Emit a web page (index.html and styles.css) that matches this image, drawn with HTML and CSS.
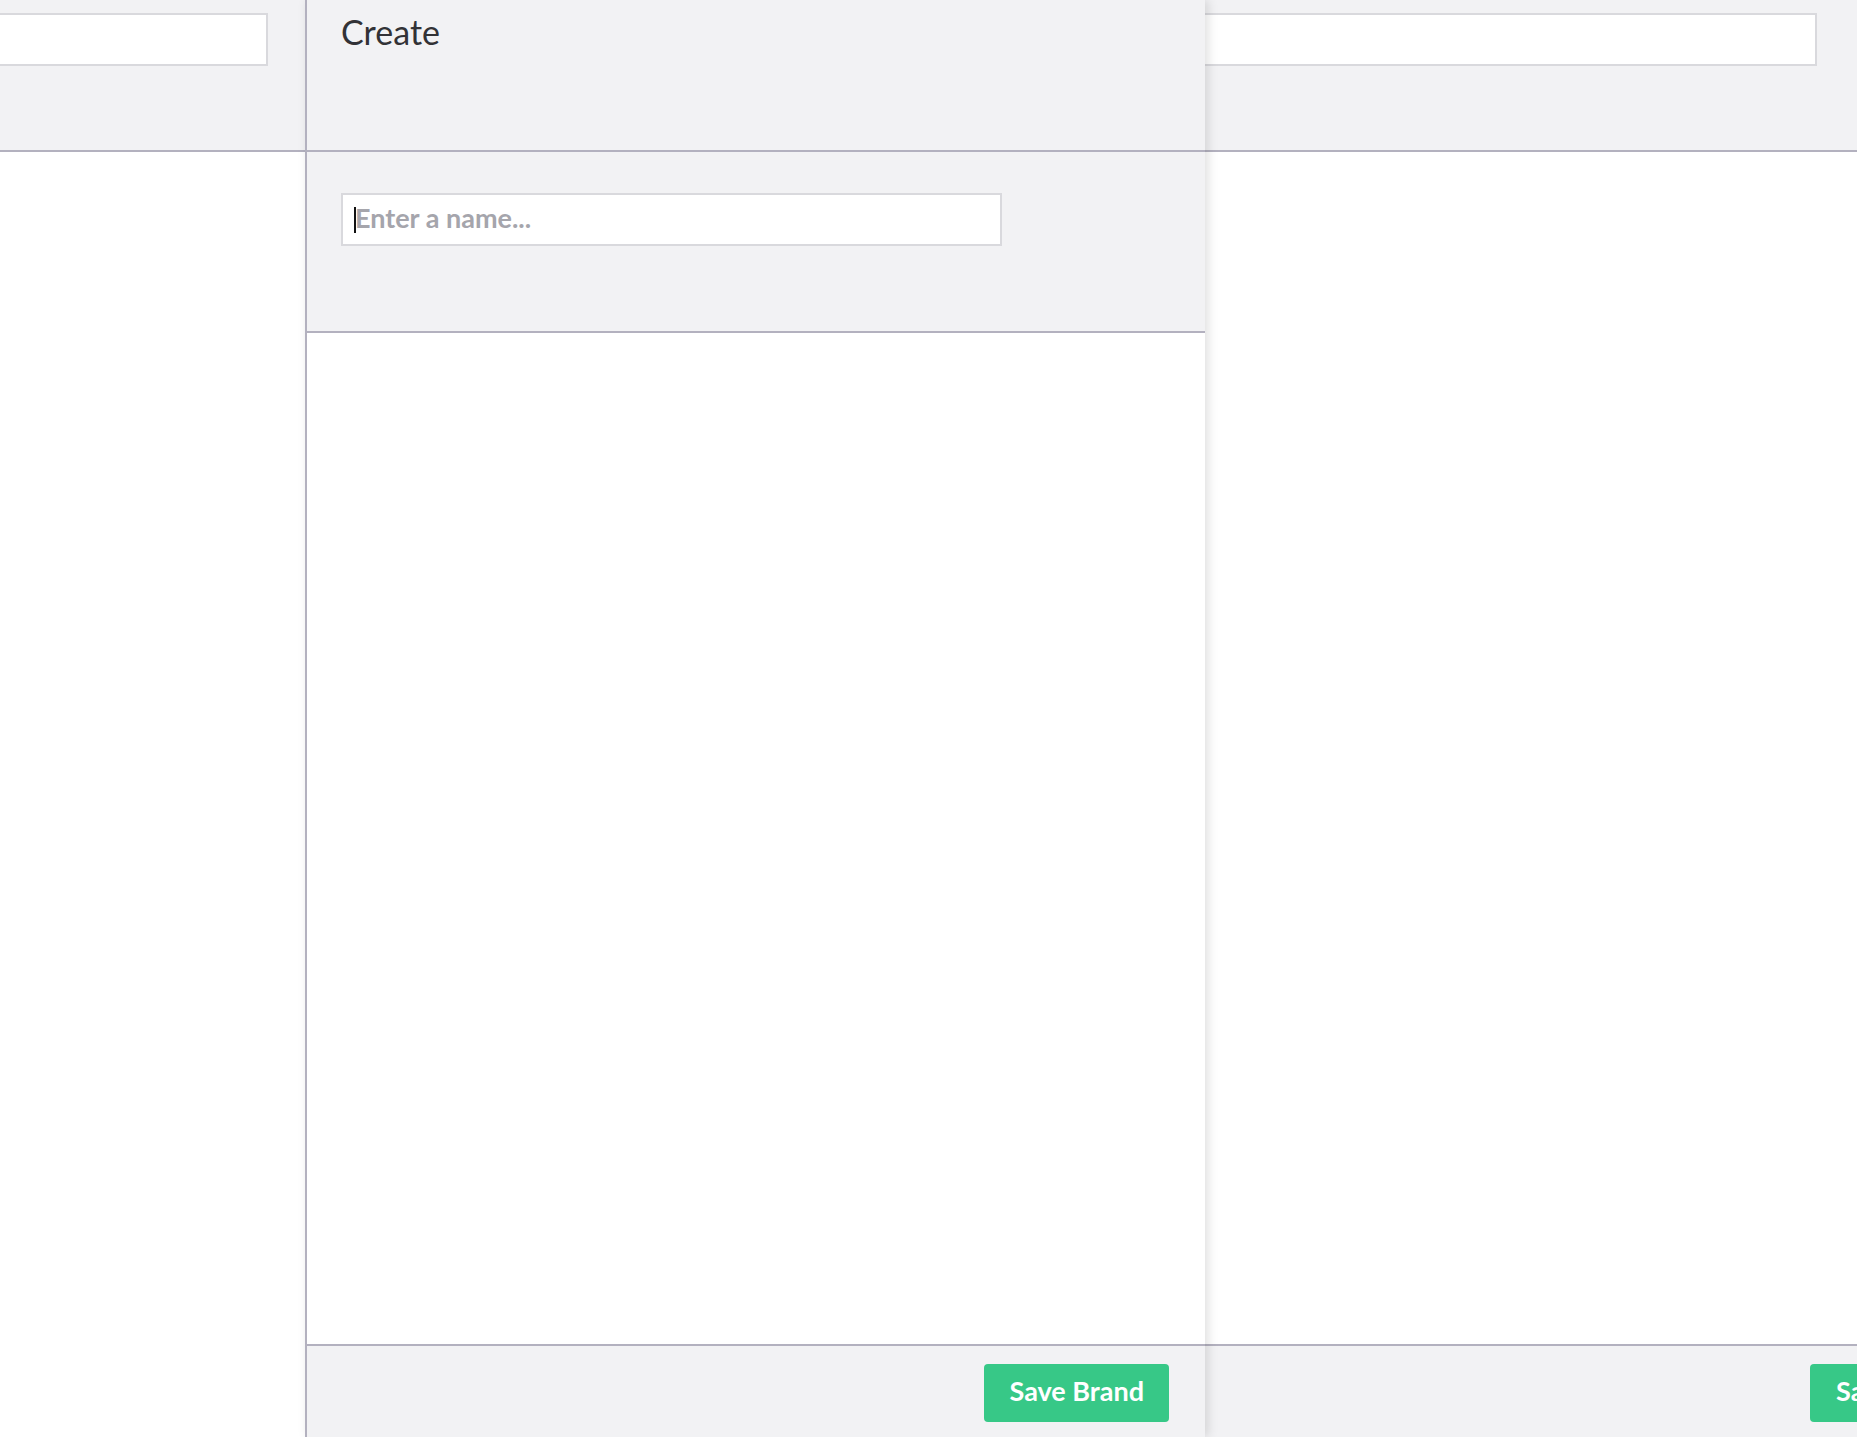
FILE: index.html
```html
<!DOCTYPE html>
<html lang="en">
<head>
<meta charset="utf-8">
<title>Create Brand</title>
<link rel="stylesheet" href="styles.css">
</head>
<body>
<div class="app">
  <section class="panel panel-left">
    <header class="panel-head">
      <input class="field" type="text" aria-label="Search">
    </header>
    <div class="panel-body"></div>
  </section>

  <section class="panel panel-create">
    <header class="panel-head create-head">
      <h1 class="title">Create</h1>
    </header>
    <div class="form-row">
      <div class="field-wrap">
        <input class="field name-field" type="text" placeholder="Enter a name...">
        <span class="caret"></span>
      </div>
    </div>
    <div class="panel-body"></div>
    <footer class="panel-foot">
      <button class="btn-save" type="button">Save Brand</button>
    </footer>
  </section>

  <section class="panel panel-right">
    <header class="panel-head right-head">
      <input class="field" type="text" aria-label="Search">
    </header>
    <div class="panel-body"></div>
    <footer class="panel-foot right-foot">
      <button class="btn-save" type="button">Save Brand</button>
    </footer>
  </section>
</div>
</body>
</html>
```

FILE: styles.css
```css
html, body {
  margin: 0;
  padding: 0;
  height: 100%;
  overflow: hidden;
  background: #ffffff;
  font-family: Lato, "Noto Sans", "Liberation Sans", sans-serif;
}

.app {
  display: flex;
  height: 1437px;
  width: 1857px;
  overflow: hidden;
}

.panel {
  display: flex;
  flex-direction: column;
  height: 100%;
  background: #ffffff;
  box-sizing: border-box;
}

.panel-head {
  flex: 0 0 150px;
  background: #f2f2f4;
  border-bottom: 2px solid #b3b1bf;
  box-sizing: content-box;
}

.panel-body {
  flex: 1 1 auto;
  background: #ffffff;
}

.field {
  display: block;
  box-sizing: border-box;
  width: 100%;
  height: 53px;
  margin: 0;
  border: 2px solid #d9d9dd;
  border-radius: 0;
  background: #ffffff;
  outline: none;
  font-family: Lato, "Noto Sans", sans-serif;
  font-size: 27px;
  font-weight: 700;
  color: #333333;
  padding: 0 12px 5px 12px;
}

.field::placeholder {
  color: #a5a5ac;
  opacity: 1;
}

/* left list panel, mostly scrolled off to the left */
.panel-left {
  flex: 0 0 900px;
  margin-left: -595px;
}

.panel-left .panel-head {
  padding: 13px 37px 0 37px;
  flex-basis: 137px;
}

/* create panel */
.panel-create {
  flex: 0 0 900px;
  border-left: 2px solid #b3b1bf;
  position: relative;
  z-index: 2;
  box-shadow: 3px 0 10px rgba(0, 0, 0, 0.13);
}

.create-head {
  padding: 11px 36px 0 34px;
  flex-basis: 139px;
}

.title {
  margin: 0;
  font-size: 34px;
  font-weight: 400;
  line-height: normal;
  color: #323236;
}

.form-row {
  flex: 0 0 138px;
  padding: 41px 36px 0 34px;
  background: #f2f2f4;
  border-bottom: 2px solid #b3b1bf;
}

.field-wrap {
  position: relative;
  width: 661px;
}

.caret {
  position: absolute;
  left: 13px;
  top: 14px;
  width: 2px;
  height: 26px;
  background: #111111;
}

.panel-foot {
  flex: 0 0 73px;
  display: flex;
  justify-content: flex-end;
  align-items: flex-start;
  padding: 18px 36px 0 34px;
  background: #f2f2f4;
  border-top: 2px solid #b3b1bf;
}

.btn-save {
  height: 58px;
  padding: 0 25px 5px 26px;
  border: none;
  border-radius: 4px;
  background: #37c887;
  color: #ffffff;
  font-family: Lato, "Noto Sans", sans-serif;
  font-size: 27px;
  font-weight: 700;
  white-space: nowrap;
  cursor: pointer;
}

/* right list panel, partly under the create panel */
.panel-right {
  flex: 1 1 auto;
  min-width: 0;
  margin-left: -20px;
  overflow: hidden;
}

.right-head {
  padding: 13px 40px 0 0;
  flex-basis: 137px;
}

.right-foot {
  justify-content: flex-start;
  padding-left: 625px;
  padding-right: 0;
}
```
